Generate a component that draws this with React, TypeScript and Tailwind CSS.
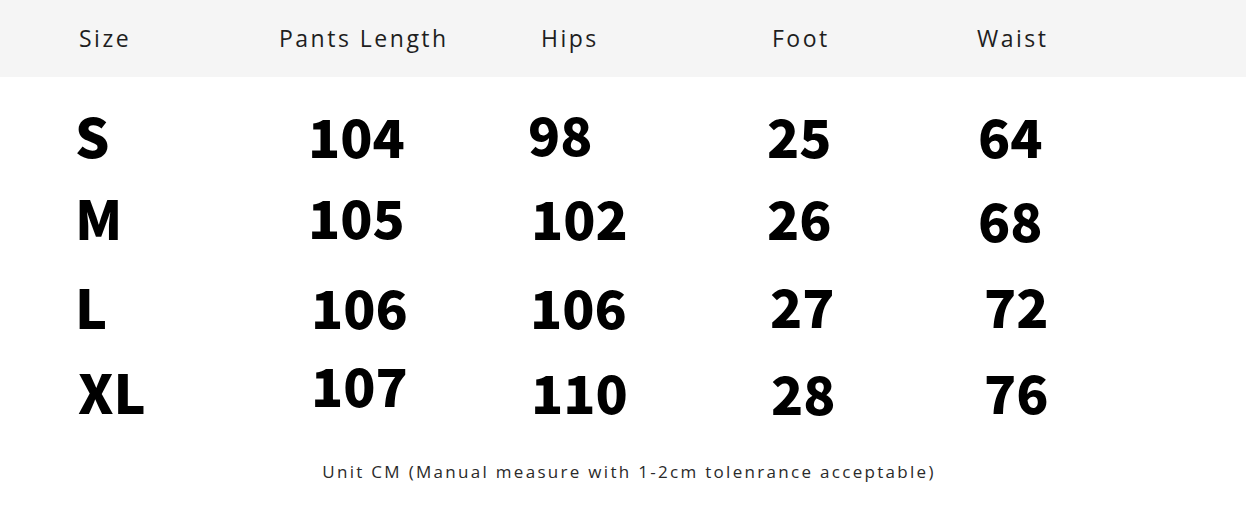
import React from "react";

type Cell = { t: string; cls: string };

const rows: { mt: string; cells: Cell[] }[] = [
  {
    mt: "mt-[29px]",
    cells: [
      { t: "S", cls: "w-[232px] pl-[0px]" },
      { t: "104", cls: "w-[220px] pl-[1px]" },
      { t: "98", cls: "w-[239px] pl-[1px] -mt-[2px]" },
      { t: "25", cls: "w-[211px] pl-[1px]" },
      { t: "64", cls: "pl-[1px]" },
    ],
  },
  {
    mt: "mt-[23px]",
    cells: [
      { t: "M", cls: "w-[232px] pl-[0px] pt-[1px]" },
      { t: "105", cls: "w-[220px] pl-[1px]" },
      { t: "102", cls: "w-[239px] pl-[4px] pt-[1px]" },
      { t: "26", cls: "w-[211px] pl-[1px] pt-[1px]" },
      { t: "68", cls: "pl-[1px] pt-[3px]" },
    ],
  },
  {
    mt: "mt-[31px]",
    cells: [
      { t: "L", cls: "w-[232px] pl-[0px] pt-[1px]" },
      { t: "106", cls: "w-[220px] pl-[4px] pt-[1px]" },
      { t: "106", cls: "w-[239px] pl-[3px] pt-[1px]" },
      { t: "27", cls: "w-[211px] pl-[4px]" },
      { t: "72", cls: "pl-[7px]" },
    ],
  },
  {
    mt: "mt-[28px]",
    cells: [
      { t: "XL", cls: "w-[232px] pl-[3px]" },
      { t: "107", cls: "w-[220px] pl-[4px] -mt-[7px]" },
      { t: "110", cls: "w-[239px] pl-[4px]" },
      { t: "28", cls: "w-[211px] pl-[5px] pt-[1px]" },
      { t: "76", cls: "pl-[7px]" },
    ],
  },
];

export default function App() {
  return (
    <div className="w-[1246px] h-[505px] bg-white overflow-hidden">
      <div
        className="h-[77px] bg-[#f5f5f5] flex pl-[79px] pt-[27px] text-[23px] leading-[23px] tracking-[2.5px] text-[#1e1e1e]"
        style={{ fontFamily: '"Open Sans", "Noto Sans", sans-serif' }}
      >
        <div className="w-[200px]">Size</div>
        <div className="w-[262px]">Pants Length</div>
        <div className="w-[231px]">Hips</div>
        <div className="w-[205px]">Foot</div>
        <div>Waist</div>
      </div>
      <div
        className="pl-[75px] text-black font-black"
        style={{ fontFamily: '"Noto Sans CJK SC", "Noto Sans", sans-serif' }}
      >
        {rows.map((r, i) => (
          <div key={i} className={`flex items-start h-[58px] ${r.mt}`}>
            {r.cells.map((c, j) => (
              <div
                key={j}
                className={`${c.cls} ${j === 0 ? "text-[54px]" : "text-[53px]"} leading-[58px]`}
              >
                {c.t}
              </div>
            ))}
          </div>
        ))}
      </div>
      <div
        className="mt-[43px] flex justify-center pl-[12px] text-[17px] leading-[17px] tracking-[2.3px] text-[#2a2a2a]"
        style={{ fontFamily: '"Open Sans", "Noto Sans", sans-serif' }}
      >
        Unit CM (Manual measure with 1-2cm tolenrance acceptable)
      </div>
    </div>
  );
}
